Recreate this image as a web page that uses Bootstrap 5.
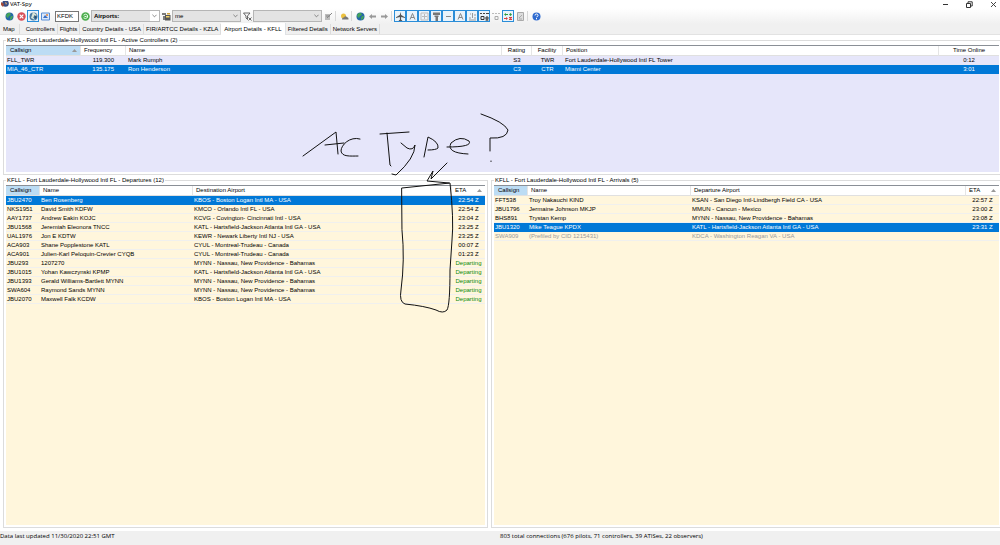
<!DOCTYPE html>
<html lang="en">
<head>
<meta charset="utf-8">
<meta name="viewport" content="width=device-width, initial-scale=1">
<title>VAT-Spy</title>
<link href="https://cdn.jsdelivr.net/npm/bootstrap@5.3.0/dist/css/bootstrap.min.css" rel="stylesheet">
<script src="https://cdn.jsdelivr.net/npm/bootstrap@5.3.0/dist/js/bootstrap.bundle.min.js"></script>
<style>
body{font:6px/8px "Liberation Sans",Arial,sans-serif;color:#000;background:#fff}
button,input,select{font:inherit;color:inherit;padding:0}
.titlebar{height:8px;font:6px/8px "Noto Sans",sans-serif;padding-left:1px;gap:10px}
.titlebar button{width:14px;height:8px;border:0;background:none;line-height:0}
.app-name{gap:1px}
.toolstrip{height:16px;padding-left:3px;background:linear-gradient(#fff,#f0f0f0)}
.tool{width:12px;height:12px;flex:none;border:1px solid transparent;background:none;display:flex;align-items:center;justify-content:center}
.tool svg{width:9px;height:9px;flex:none}
.tool.active{border-color:#2a8dd8;background:#e9f3fb}
.split{width:1px;height:10px;margin:0 2px 0 1px;background:#d8d8d8;flex:none}
.find-box{width:24px;height:11px;border:1px solid #777;background:#fff;padding-left:1px;border-radius:0}
.pick{height:12px;border:1px solid #b5b5b5;border-radius:0;padding:0 2px;appearance:none;width:69px;
background:#e3e3e3 url("data:image/svg+xml,%3Csvg xmlns='http://www.w3.org/2000/svg' viewBox='0 0 6 4'%3E%3Cpath d='M.5.5 3 3 5.500.5' fill='none' stroke='%23555' stroke-width='.8'/%3E%3C/svg%3E") no-repeat right 2px center/5px 4px}
.pick.lit{background-color:#fff;background-image:url("data:image/svg+xml,%3Csvg xmlns='http://www.w3.org/2000/svg' viewBox='0 0 6 4'%3E%3Cpath d='M.5.5 3 3 5.500.5' fill='none' stroke='%23555' stroke-width='.8'/%3E%3C/svg%3E"),linear-gradient(90deg,#e3e3e3 58px,#fff 58px);background-size:5px 4px,auto;background-position:right 2px center,0 0;background-repeat:no-repeat}
.pages{background:#f0f0f0;height:11px;border-bottom:1px solid #e2e2e2;flex-wrap:nowrap}
.pages .nav-link{height:10px;padding:0 2px;border:0;border-right:1px solid #dcdcdc;border-radius:0;color:#000;background:#f0f0f0;line-height:11px;white-space:nowrap}
.pages .nav-link:first-child{padding:0 4px 0 3px}
.pages .nav-link.active{height:12px;margin-top:-1px;background:#fff;color:#000;padding:0 3px}
.group{border:1px solid #dcdcdc;padding:4px 2px 2px;margin:0;min-width:0}
.group>h2{font:inherit;margin:-9px 0 1px 0;align-self:flex-start;background:#fff;padding:0 1px;height:8px}
.list-body{flex:1;border-top:1px solid #8a8f96;min-height:0}
.lav{background:#e6e6fa}
.corn{background:#fff6dc}
.grid{table-layout:fixed;width:100%;border-collapse:separate;border-spacing:0;white-space:nowrap}
.grid th{height:10px;background:#fff;font-weight:400;padding:0 3px;border-right:1px solid #e5e5e5;border-bottom:1px solid #e0e0e0;line-height:9px}
.grid th:last-child{border-right:0}
.grid td{height:9px;padding:0 1px;line-height:8px;border-bottom:1px solid #f0f0ee;overflow:hidden}
.lav td{border-color:#e6e6f2}
.grid .sorted{background:#bcdcf4;padding-left:4px}
.grid .pick-row td{background:#0078d7;color:#fff;border-color:#0078d7}
.grid .faded td{color:#999}
.grid td.num{text-align:right;padding-right:12px}
.grid td.inset{padding-left:2px}
.grid td.go{color:#0a8a0a}
.caret-up{float:right;width:5px;height:3px;margin-top:3px;background:#999;clip-path:polygon(50% 0,100% 100%,0 100%)}
.w-call{width:34px}.w-call-lg{width:75px}.w-freq{width:45px}.w-rate{width:30px}.w-fac{width:31px}.w-eta{width:33px}.w-time{width:60px}
.w-ctl{width:50%}.w-dep{width:153px}.w-arr{width:163px}
.controllers{height:135px;margin:5px 0 0 3px;border-right:0;padding-right:1px}
.lower{min-height:0;margin-top:5px}
.departures{width:48.5%;margin-left:3px}
.arrivals{flex:1;margin-left:3px;border-right:0;padding-right:1px}
.status{background:#f0f0f0;height:14px;margin-top:3px;font:6px/11px "Open Sans","Noto Sans",sans-serif}
.ink{position:absolute;left:30%;top:108px;width:210px;height:206px;pointer-events:none}
</style>
</head>
<body class="vh-100 d-flex flex-column overflow-hidden position-relative">
<svg class="d-none">
<symbol id="globe" viewBox="0 0 9 9"><circle cx="4.500" cy="4.500" r="4" fill="#2467a8"/><path d="M1 3Q3 0 5 1L6 3 4 4 3 6 1.500 5ZM6 4 8 4 7 7 5 8 5 6Z" fill="#43a35a"/></symbol>
<symbol id="plane" viewBox="0 0 9 9"><path d="M4.500 0 5.200 3 9 5.200V6L5.200 5 5 7.500 6.200 8.500V9H2.800V8.500L4 7.500 3.800 5 0 6V5.200L3.800 3Z" fill="#555"/></symbol>
</svg>
<header>
<div class="titlebar d-flex align-items-center">
<div class="app-name d-flex align-items-center me-auto"><svg width="8" height="7" viewBox="0 0 8 7"><circle cx="4.500" cy="2.500" r="3.300" fill="#374d86"/><path d="M0 1 3 3 2 6 0 4Z" fill="#a54b38"/><path d="M4 1 6 2 5 4Z" fill="#e6b070"/></svg>
<span>VAT-Spy</span></div>
<button aria-label="Minimize"><svg width="7" height="7"><path d="M1 3.500H6" stroke="#333"/></svg></button>
<button aria-label="Restore"><svg width="7" height="7" viewBox="0 0 7 7"><path d="M.5 2.500H4.500V6.500H.5ZM2 2.500V.8H6.200V5H4.500" fill="none" stroke="#333"/></svg></button>
<button aria-label="Close"><svg width="7" height="7"><path d="M1 1 6 6M6 1 1 6" stroke="#333" stroke-width=".9"/></svg></button>
</div>
<div class="toolstrip d-flex align-items-center">
<button class="tool" aria-label="Refresh"><svg><use href="#globe"/></svg></button>
<button class="tool" aria-label="Stop"><svg viewBox="0 0 9 9"><circle cx="4.500" cy="4.500" r="4.200" fill="#d8505a"/><path d="M2.700 2.700 6.300 6.300M6.300 2.700 2.700 6.300" stroke="#fff" stroke-width="1.200"/></svg></button>
<button class="tool active" aria-label="Auto refresh"><svg viewBox="0 0 9 9"><circle cx="4.500" cy="4.500" r="4" fill="#4a7ba0"/><path d="M4 0 8 3 4 5 6 8 2 6Z" fill="#d9e6d8"/><path d="M5 3 8 5 6 7Z" fill="#274f70"/></svg></button>
<button class="tool" aria-label="Map image"><svg viewBox="0 0 9 9"><path d="M.5 1H8.500V8H.5Z" fill="#dce9fb" stroke="#5a8fd6"/><path d="M2 6 4 3 7 6Z" fill="#3b6fc4"/><circle cx="6" cy="3" r="1" fill="#e2833b"/></svg></button>
<input class="find-box ms-1" aria-label="Find" value="KFDK">
<button class="tool" aria-label="Go"><svg viewBox="0 0 9 9"><circle cx="4.500" cy="4.500" r="4.200" fill="#4fae50"/><path d="M2.500 3.200Q4.500 1.200 6.500 3.200V5.500Q4.500 7.500 2.500 5.800M3.500 4.500H5.500" fill="none" stroke="#e9ffe9"/></svg></button>
<select class="pick lit fw-bold" aria-label="Filter type"><option>Airports:</option></select>
<button class="tool" aria-label="Save filter"><svg viewBox="0 0 9 9"><path d="M0 1H4V3H0ZM1 4H3V8H1Z" fill="#7c7c7c"/><path d="M3 3H8.500V8.500H3Z" fill="#555"/><path d="M4 4H7.500V5.500H4Z" fill="#f2d267"/><path d="M5 1H8V2.500H5Z" fill="#d2a33d"/></svg></button>
<select class="pick" aria-label="Filter"><option>me</option></select>
<button class="tool" aria-label="Apply filter"><svg viewBox="0 0 9 9"><path d="M.5 1H7L4.500 4V7.500L3 6V4ZM5.500 5.500 8.500 8.500M8.500 5.500 5.500 8.500" fill="none" stroke="#444" stroke-width=".8"/></svg></button>
<select class="pick" aria-label="Saved view" disabled><option></option></select>
<button class="tool" aria-label="Edit view"><svg viewBox="0 0 9 9"><path d="M1 2H6V8H1Z" fill="#bbb"/><path d="M3 6 8 1M2 4H6" stroke="#888"/></svg></button>
<span class="split"></span>
<button class="tool" aria-label="Weather"><svg viewBox="0 0 9 9"><circle cx="3.500" cy="4" r="2.500" fill="#ecc13e"/><path d="M2 7.500Q2 5 4 5.500 5 3.500 7 5 9 5.500 8.500 7.500Z" fill="#777"/></svg></button>
<span class="split"></span>
<button class="tool" aria-label="World"><svg><use href="#globe"/></svg></button>
<button class="tool" aria-label="Back"><svg viewBox="0 0 9 9"><path d="M1 4.500 4 2V3.500H8V5.500H4V7Z" fill="#999"/></svg></button>
<button class="tool" aria-label="Forward"><svg viewBox="0 0 9 9"><path d="M8 4.500 5 2V3.500H1V5.500H5V7Z" fill="#999"/></svg></button>
<span class="split"></span>
<button class="tool active" aria-label="Aircraft"><svg><use href="#plane"/></svg></button>
<button class="tool active" aria-label="Aircraft labels"><svg viewBox="0 0 9 9"><path d="M2 7.500 4.500 1.500 7 7.500M3 5.500H6" fill="none" stroke="#888"/></svg></button>
<button class="tool active" aria-label="Airport icons"><svg viewBox="0 0 9 9"><path d="M1 1H8V8H1ZM4.500 2V7M2 4.500H7" fill="none" stroke="#bbb"/></svg></button>
<button class="tool active" aria-label="Towers"><svg viewBox="0 0 9 9"><path d="M1 .5H8V3H1ZM2.500 3.500H6.500V5H2.500ZM3.500 5H6V9H3.500Z" fill="#777"/></svg></button>
<button class="tool active" aria-label="Centers"><svg viewBox="0 0 9 9"><path d="M2 4.500H7" stroke="#888"/></svg></button>
<button class="tool active" aria-label="Center labels"><svg viewBox="0 0 9 9"><path d="M2 7.500 4.500 1.500 7 7.500M3 5.500H6" fill="none" stroke="#888"/></svg></button>
<button class="tool active" aria-label="Routes"><svg viewBox="0 0 9 9"><path d="M1 8H8M1 6H3M6 6H8M4.500 1V6M2 2H3M6 3H8" stroke="#999"/></svg></button>
<button class="tool active" aria-label="Details"><svg viewBox="0 0 9 9"><path d="M0 1.500H2M3 1.500H5M6 1.500H9" stroke="#444"/><path d="M1 4.500H4V7.500H1ZM5 6H9M7 4V8.500M5.500 8H8.500" fill="none" stroke="#333"/></svg></button>
<button class="tool" aria-label="Selection"><svg viewBox="0 0 9 9"><path d="M0 1.500H2M3 1.500H5M6 1.500H8" stroke="#bbb"/><path d="M3 4.500H6V7.500H3Z" fill="none" stroke="#aaa"/></svg></button>
<button class="tool active" aria-label="Traffic arrows"><svg viewBox="0 0 9 9"><path d="M0 2.500 2 1V2H4V3H2V4ZM5 2.500 6.500 1 8 2.500 6.500 4Z" fill="#2e9a3e"/><path d="M0 6H2V5L4 6.500 2 8V7H0ZM5 5H8V6L6.500 7H8V8H5V7L6.500 6H5Z" fill="#d84040"/></svg></button>
<button class="tool" aria-label="Notes" disabled><svg viewBox="0 0 9 9"><path d="M1.500.5H7.500V8.500H1.500ZM3 6 6 3M3 7H6" fill="#ddd" stroke="#aaa"/></svg></button>
<span class="split"></span>
<button class="tool" aria-label="Help"><svg viewBox="0 0 9 9"><circle cx="4.500" cy="4.500" r="4" fill="#2f6bd0"/><path d="M3 3.500Q3 2 4.500 2T6 3.500Q6 4.500 4.500 5M4.500 6V7.300" fill="none" stroke="#fff"/></svg></button>
</div>
<nav class="nav nav-tabs pages">
<button class="nav-link">Map</button><button class="nav-link ms-1">Controllers</button><button class="nav-link">Flights</button><button class="nav-link">Country Details - USA</button><button class="nav-link">FIR/ARTCC Details - KZLA</button><button class="nav-link active">Airport Details - KFLL</button><button class="nav-link">Filtered Details</button><button class="nav-link">Network Servers</button>
</nav>
</header>
<main class="d-flex flex-column flex-fill overflow-hidden">
<section class="group controllers d-flex flex-column">
<h2>KFLL - Fort Lauderdale-Hollywood Intl FL - Active Controllers (2)</h2>
<div class="list-body lav">
<table class="grid">
<thead><tr><th class="w-call-lg sorted">Callsign<i class="caret-up"></i></th><th class="w-freq">Frequency</th><th class="w-ctl">Name</th><th class="w-rate text-center">Rating</th><th class="w-fac text-center">Facility</th><th class="w-ctl">Position</th><th class="w-time text-center">Time Online</th></tr></thead>
<tbody>
<tr><td>FLL_TWR</td><td class="num">119.300</td><td class="inset">Mark Rumph</td><td class="text-center">S3</td><td class="text-center">TWR</td><td class="inset">Fort Lauderdale-Hollywood Intl FL Tower</td><td class="text-center">0:12</td></tr>
<tr class="pick-row"><td>MIA_46_CTR</td><td class="num">135.175</td><td class="inset">Ron Henderson</td><td class="text-center">C3</td><td class="text-center">CTR</td><td class="inset">Miami Center</td><td class="text-center">3:01</td></tr>
</tbody></table>
</div>
</section>
<div class="lower d-flex flex-fill">
<section class="group departures d-flex flex-column">
<h2>KFLL - Fort Lauderdale-Hollywood Intl FL - Departures (12)</h2>
<div class="list-body corn">
<table class="grid">
<thead><tr><th class="w-call sorted">Callsign</th><th class="w-dep">Name</th><th>Destination Airport</th><th class="w-eta">ETA<i class="caret-up"></i></th></tr></thead>
<tbody>
<tr class="pick-row"><td>JBU2470</td><td>Ben Rosenberg</td><td>KBOS - Boston Logan Intl MA - USA</td><td class="text-center">22:54 Z</td></tr>
<tr><td>NKS1951</td><td>David Smith KDFW</td><td>KMCO - Orlando Intl FL - USA</td><td class="text-center">22:54 Z</td></tr>
<tr><td>AAY1737</td><td>Andrew Eakin KOJC</td><td>KCVG - Covington- Cincinnati Intl - USA</td><td class="text-center">23:04 Z</td></tr>
<tr><td>JBU1568</td><td>Jeremiah Eleonora TNCC</td><td>KATL - Hartsfield-Jackson Atlanta Intl GA - USA</td><td class="text-center">23:25 Z</td></tr>
<tr><td>UAL1976</td><td>Jon E KDTW</td><td>KEWR - Newark Liberty Intl NJ - USA</td><td class="text-center">23:25 Z</td></tr>
<tr><td>ACA903</td><td>Shane Popplestone KATL</td><td>CYUL - Montreal-Trudeau - Canada</td><td class="text-center">00:07 Z</td></tr>
<tr><td>ACA901</td><td>Julien-Karl Peloquin-Crevier CYQB</td><td>CYUL - Montreal-Trudeau - Canada</td><td class="text-center">01:23 Z</td></tr>
<tr><td>JBU293</td><td>1207270</td><td>MYNN - Nassau, New Providence - Bahamas</td><td class="text-center go">Departing</td></tr>
<tr><td>JBU1015</td><td>Yohan Kawczynski KPMP</td><td>KATL - Hartsfield-Jackson Atlanta Intl GA - USA</td><td class="text-center go">Departing</td></tr>
<tr><td>JBU1393</td><td>Gerald Williams-Bartlett MYNN</td><td>MYNN - Nassau, New Providence - Bahamas</td><td class="text-center go">Departing</td></tr>
<tr><td>SWA604</td><td>Raymond Sands MYNN</td><td>MYNN - Nassau, New Providence - Bahamas</td><td class="text-center go">Departing</td></tr>
<tr><td>JBU2070</td><td>Maxwell Falk KCDW</td><td>KBOS - Boston Logan Intl MA - USA</td><td class="text-center go">Departing</td></tr>
</tbody></table>
</div>
</section>
<section class="group arrivals d-flex flex-column">
<h2>KFLL - Fort Lauderdale-Hollywood Intl FL - Arrivals (5)</h2>
<div class="list-body corn">
<table class="grid">
<thead><tr><th class="w-call sorted">Callsign</th><th class="w-arr">Name</th><th>Departure Airport</th><th class="w-eta">ETA<i class="caret-up"></i></th></tr></thead>
<tbody>
<tr><td>FFT538</td><td>Troy Nakauchi KIND</td><td>KSAN - San Diego Intl-Lindbergh Field CA - USA</td><td class="text-center">22:57 Z</td></tr>
<tr><td>JBU1796</td><td>Jermaine Johnson MKJP</td><td>MMUN - Cancun - Mexico</td><td class="text-center">23:00 Z</td></tr>
<tr><td>BHS891</td><td>Trystan Kemp</td><td>MYNN - Nassau, New Providence - Bahamas</td><td class="text-center">23:08 Z</td></tr>
<tr class="pick-row"><td>JBU1320</td><td>Mike Teague KPDX</td><td>KATL - Hartsfield-Jackson Atlanta Intl GA - USA</td><td class="text-center">23:31 Z</td></tr>
<tr class="faded"><td>SWA909</td><td>(Prefiled by CID 1215431)</td><td>KDCA - Washington Reagan VA - USA</td><td></td></tr>
</tbody></table>
</div>
</section>
</div>
</main>
<footer class="status row g-0"><div class="col-6">Data last updated 11/30/2020 22:51 GMT</div><div class="col-6">803 total connections (676 pilots, 71 controllers, 39 ATISes, 22 observers)</div></footer>
<svg class="ink" viewBox="300 108 210 206" role="img" aria-label="Handwritten note: AC Type?" fill="none" stroke="#111" stroke-width="1" stroke-linecap="round" stroke-linejoin="round">
<path d="M303 156 336 132 338 154M325 145 344 143M360 139C350 136 341 145 341 151 342 157 350 156 358 156"/>
<path d="M380 134 409 132M387 133 390 165 391 166M401 143 407 148Q413 151 415 145 415 158 396 175L392 174"/>
<path d="M424 157 428 137Q439 142 438 148 436 150 428 150M447 147Q473 147 469 141 460 135 451 143 446 153 468 154"/>
<path d="M481 114Q504 122 508 130 507 139 490 138L490 151M491 161V161.500"/>
<path d="M447 163 431 179 433 171 427 181 449 183M402 188 450 183Q454 220 452 240L450 270Q450 305 447 310 443 314 436 310 425 306 405 304 399 302 401 290 405 260 402 230Z"/>
</svg>
</body>
</html>
